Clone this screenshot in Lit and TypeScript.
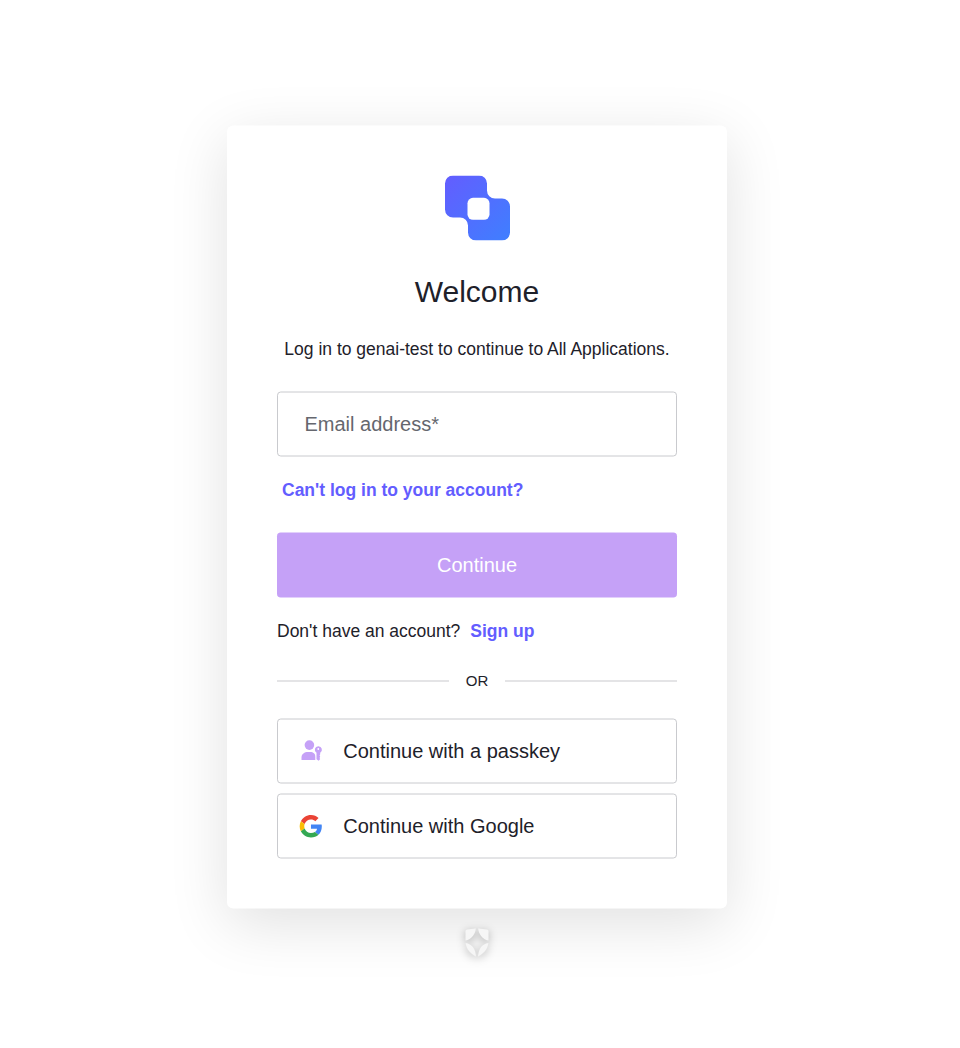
import { LitElement, html, css, svg } from "lit";
import { customElement } from "lit/decorators.js";

const brandLogo = svg`
  <svg class="logo" viewBox="0 0 65 65" aria-hidden="true">
    <defs>
      <linearGradient id="brand" x1="0" y1="0" x2="65" y2="65" gradientUnits="userSpaceOnUse">
        <stop offset="0" stop-color="#635dff"></stop>
        <stop offset="1" stop-color="#3f7fff"></stop>
      </linearGradient>
    </defs>
    <path fill="url(#brand)" d="M8 0H34a8 8 0 0 1 8 8V15a8 8 0 0 0 8 8H57a8 8 0 0 1 8 8V57a8 8 0 0 1-8 8H31a8 8 0 0 1-8-8V50a8 8 0 0 0-8-8H8a8 8 0 0 1-8-8V8a8 8 0 0 1 8-8z"></path>
    <rect x="22.5" y="22.3" width="22" height="22" rx="5.5" fill="#fff"></rect>
  </svg>`;

const passkeyIcon = svg`
  <svg class="icon" viewBox="-0.5 0 25 25" aria-hidden="true">
    <g fill="#c5a1f7">
      <circle cx="10.9" cy="6.6" r="4.8"></circle>
      <path d="M3 21.500v-2.600C3 15.500 6 13.500 9.500 13.500h2.400c2.700 0 4.900 1.700 4.900 4.500v3.500z"></path>
      <path fill-rule="evenodd" d="M19.800 7.700a3.500 3.500 0 0 1 1.900 6.500v1.500l-.6 1.200.6 1.300-.7 1.200.7 1.100-1.500 1.700-2.200-1.500v-6.500A3.500 3.500 0 0 1 19.800 7.700zm0 1.900a.9.9 0 1 0 0 1.800.9.9 0 0 0 0-1.800z"></path>
    </g>
  </svg>`;

const googleIcon = svg`
  <svg class="icon google" viewBox="-1 -0.6 48 48" aria-hidden="true">
    <path fill="#EA4335" d="M24 9.5c3.54 0 6.71 1.22 9.21 3.6l6.85-6.85C35.9 2.38 30.47 0 24 0 14.62 0 6.51 5.38 2.56 13.22l7.98 6.19C12.43 13.72 17.74 9.5 24 9.5z"></path>
    <path fill="#4285F4" d="M46.98 24.55c0-1.57-.15-3.09-.38-4.55H24v9.02h12.940c-.58 2.960-2.260 5.480-4.780 7.180l7.730 6c4.510-4.180 7.090-10.360 7.090-17.650z"></path>
    <path fill="#FBBC05" d="M10.530 28.590c-.48-1.450-.76-2.990-.76-4.590s.27-3.140.76-4.590l-7.980-6.190C.92 16.460 0 20.120 0 24c0 3.880.92 7.540 2.560 10.780l7.970-6.190z"></path>
    <path fill="#34A853" d="M24 48c6.480 0 11.930-2.130 15.890-5.810l-7.730-6c-2.150 1.450-4.920 2.300-8.160 2.300-6.260 0-11.570-4.220-13.470-9.910l-7.980 6.190C6.510 42.620 14.620 48 24 48z"></path>
  </svg>`;

const shieldBadge = svg`
  <svg class="badge" viewBox="0 0 24 28" aria-hidden="true">
    <g fill="#f6f6f6">
      <path d="M2.400.9 10.800 0C10.200 6 6.500 10.800.5 12V3C.5 1.700 1.200 1 2.400.9z"></path>
      <path d="M21.600.9 13.200 0C13.800 6 17.500 10.800 23.500 12V3C23.500 1.700 22.800 1 21.600.9z"></path>
      <path d="M.7 14.500C6.500 15.600 10.400 19.500 10.900 27.900 5.300 25.300 1.300 20.500.7 14.500z"></path>
      <path d="M23.300 14.500C17.500 15.600 13.600 19.500 13.100 27.900 18.700 25.300 22.700 20.500 23.300 14.500z"></path>
    </g>
  </svg>`;

@customElement("app-root")
export class AppRoot extends LitElement {
  static styles = css`
    :host {
      display: block;
      box-sizing: border-box;
      height: 1048px;
      padding: 125px 6px 0 0;
      overflow: hidden;
      background: #fff;
      color: #1e212a;
      font-family: "Liberation Sans", Arial, sans-serif;
    }
    .page {
      display: flex;
      flex-direction: column;
      align-items: center;
      transform: translateY(0.5px);
    }
    .card {
      box-sizing: border-box;
      width: 500px;
      height: 783px;
      padding: 50px;
      border-radius: 6.25px;
      background: #fff;
      box-shadow: 0 15px 60px rgba(0, 0, 0, 0.12);
      display: flex;
      flex-direction: column;
    }
    .logo {
      display: block;
      width: 65px;
      height: 65px;
      margin: 0 auto 0 168px;
    }
    h1 {
      margin: 29px 0 0;
      font-size: 30px;
      line-height: 44px;
      font-weight: 400;
      text-align: center;
    }
    p {
      margin: 0;
      font-size: 17.5px;
      line-height: 25px;
    }
    .lead {
      margin: 22.5px 0 30.5px;
      text-align: center;
      white-space: nowrap;
    }
    input {
      box-sizing: border-box;
      width: 400px;
      height: 65px;
      margin: 0;
      padding: 0 26.5px 1px;
      border: 1px solid #c9cace;
      border-radius: 3.75px;
      background: #fff;
      color: inherit;
      font: 20px "Liberation Sans", Arial, sans-serif;
      outline: none;
    }
    input::placeholder {
      color: #65676e;
      opacity: 1;
    }
    a {
      color: #635dff;
      font-weight: 700;
      text-decoration: none;
    }
    .help {
      margin: 20.5px 0 30.5px 5px;
    }
    button {
      box-sizing: border-box;
      height: 65px;
      margin: 0;
      border-radius: 3.75px;
      font: 20px "Liberation Sans", Arial, sans-serif;
    }
    .primary {
      border: 0;
      padding: 0 0 1px;
      background: #c5a1f7;
      color: #fff;
    }
    .signup {
      margin-top: 20.5px;
    }
    .signup a {
      margin-left: 5px;
    }
    .divider {
      display: flex;
      align-items: center;
      margin: 28.5px 0 28px;
      font-size: 15px;
    }
    .divider::before,
    .divider::after {
      content: "";
      flex: 1;
      height: 1px;
      background: #c9cace;
    }
    .divider span {
      width: 56px;
      padding-bottom: 2px;
      line-height: 17px;
      text-align: center;
    }
    .providers {
      display: grid;
      gap: 10px;
    }
    .provider {
      display: flex;
      align-items: center;
      gap: 20px;
      padding: 0 20.25px;
      border: 1px solid #c9cace;
      background: #fff;
      color: #1e212a;
      text-align: left;
    }
    .provider span {
      padding-bottom: 1px;
    }
    .icon {
      width: 25px;
      height: 25px;
      flex: none;
      overflow: visible;
    }
    .google {
      box-sizing: border-box;
      padding: 1.2px;
    }
    .badge {
      width: 24px;
      height: 28px;
      margin-top: 20px;
      overflow: visible;
      filter: drop-shadow(0 2.5px 4px rgba(0, 0, 0, 0.3));
    }
  `;

  render() {
    return html`
      <div class="page">
        <main class="card">
          ${brandLogo}
          <h1>Welcome</h1>
          <p class="lead">Log in to genai-test to continue to All Applications.</p>
          <input type="email" placeholder="Email address*" aria-label="Email address" />
          <p class="help"><a href="#">Can't log in to your account?</a></p>
          <button class="primary">Continue</button>
          <p class="signup">Don't have an account? <a href="#">Sign up</a></p>
          <div class="divider"><span>OR</span></div>
          <div class="providers">
            <button class="provider">${passkeyIcon}<span>Continue with a passkey</span></button>
            <button class="provider">${googleIcon}<span>Continue with Google</span></button>
          </div>
        </main>
        ${shieldBadge}
      </div>
    `;
  }
}
